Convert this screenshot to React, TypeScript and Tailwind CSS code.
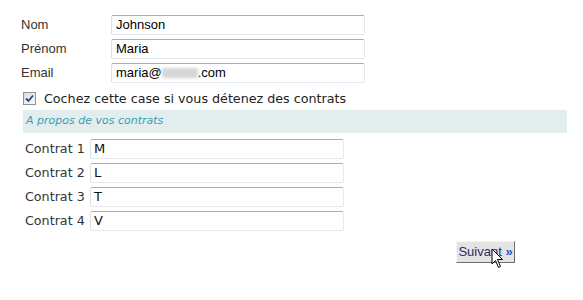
// Formulaire contrats - étape 1

function Field({ value, children }: { value?: string; children?: React.ReactNode }) {
  return (
    <div className="h-[20px] w-[254px] rounded-[2px] border border-t-[#abadb3] border-l-[#dbdfe6] border-r-[#e3e9ef] border-b-[#e3e9ef] bg-white px-[4px] text-[13px] leading-[18px] text-[#000] [font-family:'Liberation_Sans',Arial,sans-serif]">
      {value}
      {children}
    </div>
  );
}

export default function App() {
  const people = [
    { label: "Nom", value: "Johnson" },
    { label: "Prénom", value: "Maria" },
  ];
  const contrats = ["M", "L", "T", "V"];

  return (
    <div className="relative h-[300px] w-[583px] overflow-hidden bg-white text-[#222]">
      {/* Identité */}
      <div className="ml-[21px] mt-[15px] flex flex-col gap-[4px] [font-family:'Liberation_Sans',Arial,sans-serif] text-[13px]">
        {people.map((p) => (
          <div key={p.label} className="flex items-center">
            <span className="w-[90px] text-[#333]">{p.label}</span>
            <Field value={p.value} />
          </div>
        ))}
        <div className="flex items-center">
          <span className="w-[90px] text-[#333]">Email</span>
          <Field>
            maria@
            <span className="inline-block h-[10px] w-[36px] align-[-1px] rounded-[2px] bg-[#d6d6d6] blur-[1.5px]" />
            .com
          </Field>
        </div>
      </div>

      {/* Case à cocher */}
      <div className="ml-[23px] mt-[6px] flex h-[19px] items-center gap-[8px] [font-family:'DejaVu_Sans',Verdana,sans-serif] text-[12.7px] text-[#222]">
        <span className="flex h-[13px] w-[13px] items-center justify-center border border-[#8f8f9d] bg-gradient-to-br from-[#dcdcdc] to-[#fafafa]">
          <svg width="9" height="9" viewBox="0 0 9 9">
            <path d="M1 4.5 L3.5 7 L8 1.5" fill="none" stroke="#2a3f8f" strokeWidth="1.8" />
          </svg>
        </span>
        <span>Cochez cette case si vous détenez des contrats</span>
      </div>

      {/* Bandeau */}
      <div className="ml-[23px] mt-[2px] flex h-[23px] w-[544px] items-center bg-[#e2eeee] pl-[3px] [font-family:'DejaVu_Sans',Verdana,sans-serif] text-[11px] italic text-[#3a9fae]">
        A propos de vos contrats
      </div>

      {/* Contrats */}
      <div className="ml-[25px] mt-[6px] flex flex-col gap-[4px] [font-family:'DejaVu_Sans',Verdana,sans-serif] text-[12.7px]">
        {contrats.map((c, i) => (
          <div key={i} className="flex items-center">
            <span className="w-[65px] text-[#333]">Contrat {i + 1}</span>
            <div className="h-[20px] w-[254px] rounded-[2px] border border-t-[#abadb3] border-l-[#dbdfe6] border-r-[#e3e9ef] border-b-[#e3e9ef] bg-white px-[3px] text-[13px] leading-[18px] text-[#111]">
              {c}
            </div>
          </div>
        ))}
      </div>

      {/* Bouton */}
      <div className="ml-[456px] mt-[7px]">
        <button className="h-[22px] w-[59px] border border-t-[#f4f4f4] border-l-[#f4f4f4] border-r-[#6d6d6d] border-b-[#6d6d6d] bg-[#e4e4e4] px-0 text-[13px] [font-family:'Liberation_Sans',Arial,sans-serif] text-[#2c2c6a]">
          Suivant <span className="font-bold text-[#2255cc]">»</span>
        </button>
      </div>

      {/* Curseur */}
      <svg className="absolute left-[491px] top-[248px]" width="14" height="22" viewBox="0 0 14 22">
        <path d="M1 1 L1 16 L4.5 12.5 L7.5 19.5 L9.5 18.5 L6.5 11.5 L11.5 11.5 Z" fill="white" stroke="black" strokeWidth="1" strokeLinejoin="round" />
      </svg>
    </div>
  );
}
